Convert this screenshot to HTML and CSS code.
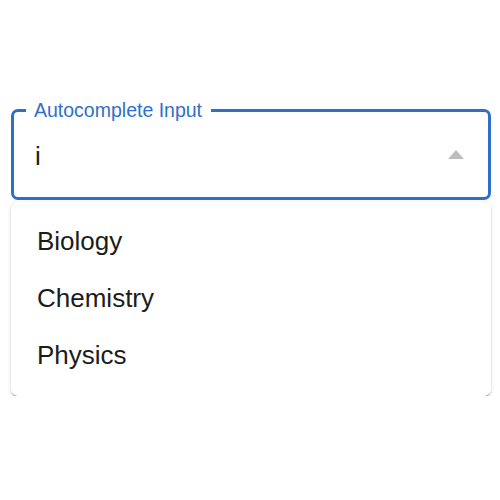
FILE: index.html
```html
<!DOCTYPE html>
<html>
<head>
<meta charset="utf-8">
<link rel="stylesheet" href="styles.css">
</head>
<body>
<div class="wrap">
  <fieldset class="field">
    <legend class="label">Autocomplete Input</legend>
    <div class="row">
      <span class="value">i</span>
      <svg class="arrow" width="16" height="9" viewBox="0 0 16 9"><path d="M0 9 L8 0 L16 9 Z" fill="#bdbdbd"/></svg>
    </div>
  </fieldset>
  <ul class="menu">
    <li class="option">Biology</li>
    <li class="option">Chemistry</li>
    <li class="option">Physics</li>
  </ul>
</div>
</body>
</html>
```
FILE: styles.css
```css
html, body {
  margin: 0;
  padding: 0;
  background: #ffffff;
}
body {
  font-family: "Liberation Sans", Arial, Helvetica, sans-serif;
}
.wrap {
  width: 480px;
  margin-left: 11px;
  padding-top: 99px;
}
.field {
  margin: 0;
  padding: 0;
  border: 3px solid #2f6fcb;
  border-radius: 7px;
  min-width: 0;
}
.label {
  margin-left: 12px;
  padding: 0 9px 0 8px;
  font-size: 19.5px;
  line-height: 22px;
  color: #2f6fcb;
}
.row {
  display: flex;
  align-items: center;
  justify-content: space-between;
  padding: 20px 24px 26px 21px;
}
.value {
  font-size: 26px;
  line-height: 30px;
  color: #1c1c1c;
}
.arrow {
  display: block;
  margin-bottom: 4px;
}
.menu {
  list-style: none;
  margin: 2px 0 0 0;
  padding: 11px 0 12px;
  border-radius: 7px;
  background: #ffffff;
  box-shadow: 0 2px 1px -1px rgba(0,0,0,0.3), 0 1px 2px rgba(0,0,0,0.16), 0 1px 5px rgba(0,0,0,0.1);
}
.option {
  height: 57px;
  line-height: 57px;
  padding-left: 26px;
  font-size: 26px;
  color: #1c1c1c;
}
```
